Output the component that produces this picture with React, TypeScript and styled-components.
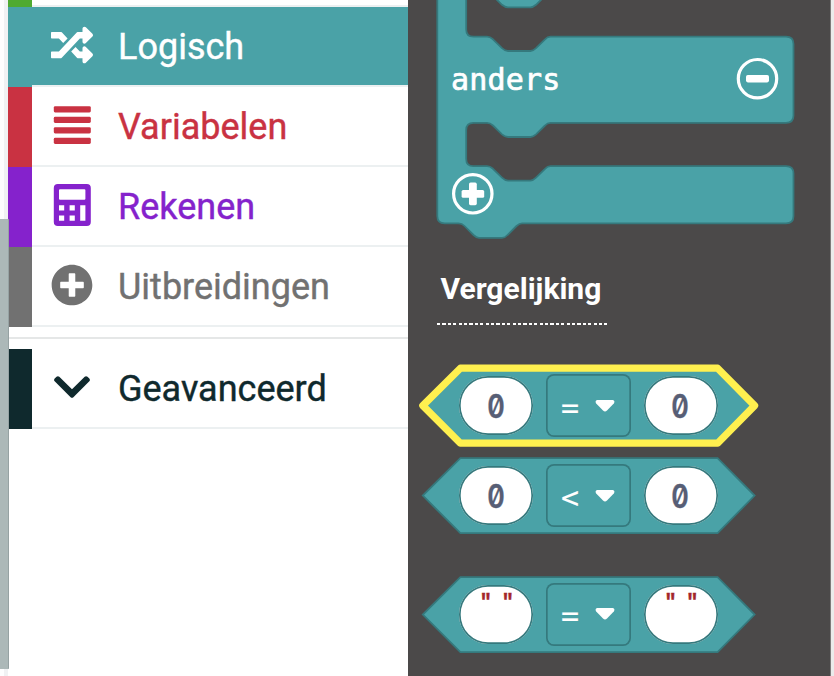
import React from "react";
import styled, { createGlobalStyle } from "styled-components";
import { FaChevronDown, FaPlusCircle, FaRandom } from "react-icons/fa";

const TEAL = "#4aa2a7";
const TEAL_EDGE = "#35797d";

const GlobalStyle = createGlobalStyle`
  * { box-sizing: border-box; }
  body { margin: 0; background: #fff; overflow: hidden; }
`;

const Page = styled.div`
  display: flex;
  width: 834px;
  height: 676px;
  overflow: hidden;
  background: #fff;
  font-family: Roboto, sans-serif;
`;

const Gutter = styled.div`
  position: relative;
  flex: 0 0 8px;
  background: linear-gradient(to right, #fdfdfe 4px, #f0f1f3 4px);
`;

const ScrollThumb = styled.div`
  position: absolute;
  left: 0;
  top: 219px;
  width: 9px;
  height: 450px;
  background: #acb8b8;
  border-right: 1px solid #96a2a3;
  border-radius: 0 1px 1px 0;
`;

const Toolbox = styled.nav`
  flex: 0 0 400px;
  display: flex;
  flex-direction: column;
`;

const PreviousCategory = styled.div`
  height: 7px;
  border-left: 24px solid #4faa31;
  background: linear-gradient(#fff 5px, #ecf0f1 5px);
`;

const Category = styled.div<{ $color: string; $selected?: boolean }>`
  display: flex;
  height: 80px;
  color: ${(p) => (p.$selected ? "#fff" : p.$color)};
  background: ${(p) => p.$color};
  padding-left: 24px;
`;

const CategoryBody = styled.div<{ $fill: string }>`
  flex: 1;
  display: flex;
  align-items: center;
  background: ${(p) => p.$fill};
  border-bottom: 2px solid #ecf0f1;
`;

const CategoryIcon = styled.span`
  display: flex;
  justify-content: center;
  width: 80px;
  font-size: 42px;
  padding-bottom: 2px;
`;

const CategoryName = styled.span`
  margin-left: 6px;
  padding-top: 2px;
  font-size: 36px;
  line-height: 42px;
  -webkit-text-stroke: 0.4px currentColor;
`;

const Separator = styled.div`
  height: 2px;
  margin: 10px 0;
  background: #e5e7e7;
`;

const Flyout = styled.section`
  flex: 0 0 422px;
  display: flex;
  flex-direction: column;
  background: #4b4949;
`;

const PageEdge = styled.div`
  flex: 1;
  border-left: 1px solid #7d7b7b;
  background: #ebebeb;
`;

const StatementBlock = styled.div`
  display: grid;
  height: 240px;
  > * { grid-area: 1 / 1; }
`;

const StatementLabel = styled.span`
  margin: 62.4px 0 0 43px;
  font: 30px/36px "DejaVu Sans Mono", monospace;
  letter-spacing: 0.2px;
  color: #fff;
  -webkit-text-stroke: 0.7px #fff;
`;

const GroupHeading = styled.h2`
  margin: 31px 0 0 29px;
  padding: 0 0 0 3.5px;
  width: 170px;
  height: 55px;
  font-size: 30px;
  line-height: 35px;
  font-weight: 700;
  white-space: nowrap;
  color: #fff;
  background: repeating-linear-gradient(to right, #fff 0 3.2px, transparent 3.2px 5.4px) 0 52px / 100% 2px no-repeat;
`;

const BlockList = styled.div`
  margin: 38px 0 0 9px;
  display: flex;
  flex-direction: column;
`;

const ComparisonBlock = styled.div<{ $gap: number }>`
  display: grid;
  width: 344px;
  height: 84px;
  margin-bottom: ${(p) => p.$gap}px;
  > * { grid-area: 1 / 1; }
`;

const BlockFields = styled.div`
  display: flex;
  align-items: center;
  gap: 13px;
  padding: 0 0 1px 42.4px;
`;

const Pill = styled.div<{ $text?: boolean }>`
  width: 73.6px;
  height: 59px;
  display: flex;
  justify-content: center;
  align-items: ${(p) => (p.$text ? "flex-start" : "center")};
  box-shadow: inset 0 0 0 1.7px ${TEAL_EDGE};
  border-radius: 29px;
  background: #fff;
`;

const NumberText = styled.span`
  font: 600 32px/36px Inter, sans-serif;
  font-feature-settings: "zero" 1;
  color: #575e75;
  -webkit-text-stroke: 0.3px #575e75;
  transform: translate(-0.6px, 0.5px) scaleX(0.83);
`;

const QuoteText = styled.span`
  font: bold 20px/28px "Liberation Mono", monospace;
  letter-spacing: -1.1px;
  padding: 4px 0 0;
  white-space: pre;
  color: #a3262a;
  -webkit-text-stroke: 0.5px #a3262a;
`;

const Dropdown = styled.div`
  width: 85px;
  height: 63px;
  display: flex;
  align-items: center;
  gap: 16px;
  padding-left: 15px;
  box-shadow: inset 0 0 0 1.7px ${TEAL_EDGE};
  border-radius: 8px;
`;

const Operator = styled.span`
  width: 18px;
  font: 30px/36px "DejaVu Sans Mono", monospace;
  color: #fff;
  -webkit-text-stroke: 0.2px #fff;
  padding-top: 4px;
`;

function ListBarsIcon() {
  return (
    <svg width="38" height="42" viewBox="0 0 38 42" fill="currentColor">
      {[2.2, 12.8, 23.2, 33.8].map((y) => (
        <rect key={y} x="0.8" y={y} width="37" height="6.2" rx="1.4" />
      ))}
    </svg>
  );
}

function CalculatorIcon() {
  return (
    <svg width="38" height="42" viewBox="0 0 38 42">
      <path
        fill="currentColor"
        fillRule="evenodd"
        d="M4.8 0H33.8A4 4 0 0 1 37.8 4V38A4 4 0 0 1 33.8 42H4.8A4 4 0 0 1 0.8 38V4A4 4 0 0 1 4.8 0Z
           M7 5.3A1 1 0 0 0 6 6.3V14.8A1 1 0 0 0 7 15.8H31.4A1 1 0 0 0 32.4 14.8V6.3A1 1 0 0 0 31.4 5.3Z
           M6 21.2V26.4H11.2V21.2Z M16.6 21.2V26.4H21.8V21.2Z M6 31.6V36.8H11.2V31.6Z M16.6 31.6V36.8H21.8V31.6Z
           M27.2 21.2V36.8H32.4V21.2Z"
      />
    </svg>
  );
}

type CategoryData = { name: string; color: string; icon: React.ComponentType; selected?: boolean };

const categories: CategoryData[] = [
  { name: "Logisch", color: TEAL, icon: FaRandom, selected: true },
  { name: "Variabelen", color: "#c93242", icon: ListBarsIcon },
  { name: "Rekenen", color: "#8522cc", icon: CalculatorIcon },
  { name: "Uitbreidingen", color: "#717171", icon: FaPlusCircle },
];

const advanced: CategoryData = { name: "Geavanceerd", color: "#0f292d", icon: FaChevronDown };

function CategoryRow({ data }: { data: CategoryData }) {
  const Icon = data.icon;
  return (
    <Category $color={data.color} $selected={data.selected}>
      <CategoryBody $fill={data.selected ? data.color : "#fff"}>
        <CategoryIcon><Icon /></CategoryIcon>
        <CategoryName>{data.name}</CategoryName>
      </CategoryBody>
    </Category>
  );
}

function IfElseShape() {
  return (
    <svg width="422" height="240" viewBox="408 0 422 240">
      <path
        fill={TEAL}
        stroke={TEAL_EDGE}
        strokeWidth="1.8"
        d="M437.3 -20 V216 Q437.3 223.4 444.7 223.4 H458.5 Q462 223.4 464.5 226 L473.5 235 Q476.5 237.8 479 237.8 H502 Q505 237.8 507.5 235 L516.5 226 Q519.5 223.4 522 223.4 H786 Q793.5 223.4 793.5 216 V173.5 Q793.5 166.2 786 166.2 H550.5 Q547.5 166.2 545 168.8 L536 177.7 Q533 180.6 530.5 180.6 H508 Q505 180.6 502 177.7 L493 168.8 Q490 166.2 487 166.2 H473.5 Q466.2 166.2 466.2 159 V130 Q466.2 122.8 473.5 122.8 H487 Q490 122.8 493 125.5 L502 134.3 Q505 137 508 137 H530.5 Q533 137 536 134.3 L545 125.5 Q547.5 122.8 550.5 122.8 H786 Q793.5 122.8 793.5 115.5 V44 Q793.5 36.7 786 36.7 H550.5 Q547.5 36.7 545 39.3 L536 48.2 Q533 51 530.5 51 H508 Q505 51 502 48.2 L493 39.3 Q490 36.7 487 36.7 H473.5 Q466.2 36.7 466.2 29.5 V-6.5 H487 Q490 -6.5 493 -4 L502 4.8 Q505 7.3 508 7.3 H530.5 Q533 7.3 536 4.8 L545 -4 V-20 Z"
      />
      <circle cx="757.5" cy="78.7" r="19.2" fill="none" stroke="#fff" strokeWidth="3.2" />
      <rect x="746" y="75" width="23" height="7.4" rx="1.8" fill="#fff" />
      <circle cx="472.8" cy="193.8" r="19.2" fill="none" stroke="#fff" strokeWidth="3.2" />
      <rect x="461.6" y="190" width="22.6" height="7.8" rx="1.6" fill="#fff" />
      <rect x="469" y="182.6" width="7.8" height="22.6" rx="1.6" fill="#fff" />
    </svg>
  );
}

function HexShape({ highlighted }: { highlighted?: boolean }) {
  return (
    <svg width="344" height="84" viewBox="0 0 344 84">
      <path
        d="M43.4 4.2 H300.6 L337.6 41.6 L300.6 79.2 H43.4 L5.8 41.6 Z"
        fill={TEAL}
        stroke={highlighted ? "#fff04f" : TEAL_EDGE}
        strokeWidth={highlighted ? 7.2 : 1.8}
        strokeLinejoin={highlighted ? "round" : "miter"}
      />
    </svg>
  );
}

type ComparisonProps = { operator: string; kind: "number" | "text"; gap: number; highlighted?: boolean };

function Comparison({ operator, kind, gap, highlighted }: ComparisonProps) {
  const field =
    kind === "number" ? <Pill><NumberText>0</NumberText></Pill> : <Pill $text><QuoteText>{'" "'}</QuoteText></Pill>;
  return (
    <ComparisonBlock $gap={gap}>
      <HexShape highlighted={highlighted} />
      <BlockFields>
        {field}
        <Dropdown>
          <Operator>{operator}</Operator>
          <svg width="20" height="14" viewBox="0 0 20 14">
            <path d="M2 1 H18 Q20.4 2 18.8 4.4 L12 11.5 Q10 13.5 8 11.5 L1.2 4.4 Q-0.4 2 2 1 Z" fill="#fff" />
          </svg>
        </Dropdown>
        {field}
      </BlockFields>
    </ComparisonBlock>
  );
}

export default function App() {
  return (
    <>
      <GlobalStyle />
      <Page>
        <Gutter><ScrollThumb /></Gutter>
        <Toolbox>
          <PreviousCategory />
          {categories.map((c) => <CategoryRow key={c.name} data={c} />)}
          <Separator />
          <CategoryRow data={advanced} />
        </Toolbox>
        <Flyout>
          <StatementBlock>
            <IfElseShape />
            <StatementLabel>anders</StatementLabel>
          </StatementBlock>
          <GroupHeading>Vergelijking</GroupHeading>
          <BlockList>
            <Comparison operator="=" kind="number" gap={6} highlighted />
            <Comparison operator="<" kind="number" gap={34.7} />
            <Comparison operator="=" kind="text" gap={0} />
          </BlockList>
        </Flyout>
        <PageEdge />
      </Page>
    </>
  );
}
